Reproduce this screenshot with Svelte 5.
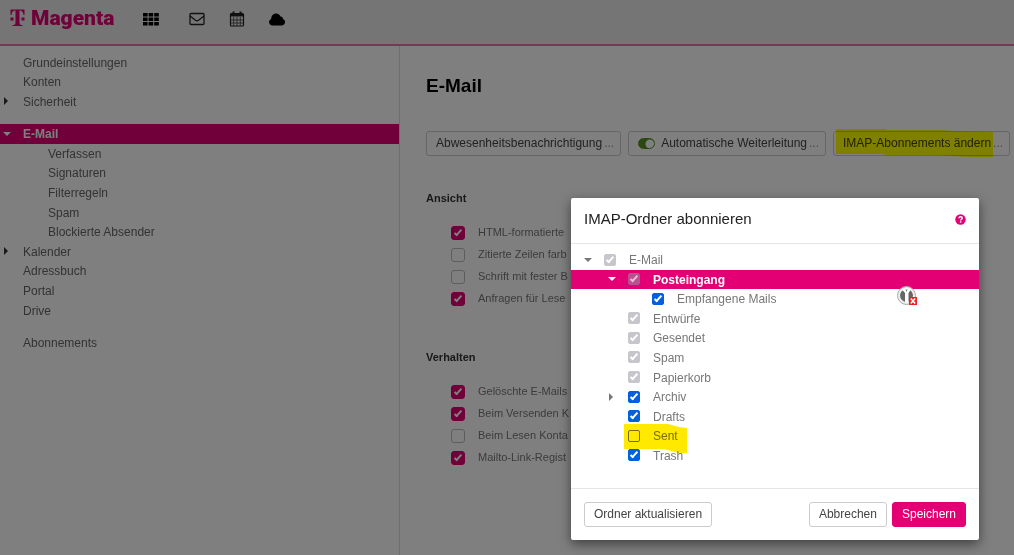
<script>
  const navGroups = [
    [
      { label: 'Grundeinstellungen' },
      { label: 'Konten' },
      { label: 'Sicherheit', arrow: 'closed' }
    ],
    [
      { label: 'E-Mail', arrow: 'open', active: true },
      { label: 'Verfassen', sub: true },
      { label: 'Signaturen', sub: true },
      { label: 'Filterregeln', sub: true },
      { label: 'Spam', sub: true },
      { label: 'Blockierte Absender', sub: true },
      { label: 'Kalender', arrow: 'closed' },
      { label: 'Adressbuch' },
      { label: 'Portal' },
      { label: 'Drive' }
    ],
    [{ label: 'Abonnements' }]
  ];

  const sections = [
    {
      title: 'Ansicht',
      options: [
        { label: 'HTML-formatierte', checked: true },
        { label: 'Zitierte Zeilen farb', checked: false },
        { label: 'Schrift mit fester B', checked: false },
        { label: 'Anfragen für Lese', checked: true }
      ]
    },
    {
      title: 'Verhalten',
      options: [
        { label: 'Gelöschte E-Mails', checked: true },
        { label: 'Beim Versenden K', checked: true },
        { label: 'Beim Lesen Konta', checked: false },
        { label: 'Mailto-Link-Regist', checked: true }
      ]
    }
  ];

  const folders = [
    { label: 'E-Mail', level: 0, arrow: 'open', checked: true, disabled: true },
    { label: 'Posteingang', level: 1, arrow: 'open', checked: true, disabled: true, active: true },
    { label: 'Empfangene Mails', level: 2, checked: true },
    { label: 'Entwürfe', level: 1, checked: true, disabled: true },
    { label: 'Gesendet', level: 1, checked: true, disabled: true },
    { label: 'Spam', level: 1, checked: true, disabled: true },
    { label: 'Papierkorb', level: 1, checked: true, disabled: true },
    { label: 'Archiv', level: 1, arrow: 'closed', checked: true },
    { label: 'Drafts', level: 1, checked: true },
    { label: 'Sent', level: 1, checked: false, marked: true },
    { label: 'Trash', level: 1, checked: true }
  ];
</script>

{#snippet caret(state)}
  <span class="caret">
    {#if state === 'open'}
      <svg width="8" height="4" viewBox="0 0 8 4"><path d="M0 0h8L4 4z" fill="currentColor" /></svg>
    {:else if state === 'closed'}
      <svg width="8" height="8" viewBox="0 0 8 8"><path d="M1 0v8l4-4z" fill="currentColor" /></svg>
    {/if}
  </span>
{/snippet}

<div class="app">
  <header>
    <a class="brand" href="#home">
      <svg width="15" height="18" viewBox="0 0 15 18" fill="#e20074">
        <path d="M0.5 0.5h14v5.500h-1c-.2-2.800-1.500-4.300-4-4.400v11.400c0 2.400.5 3 3 3.100v.9H2.500v-.9c2.500-.1 3-.7 3-3.100V1.600C3 1.700 1.700 3.200 1.500 6h-1z" />
        <path d="M.5 8.500h3v3h-3zM11.500 8.500h3v3h-3z" />
      </svg>
      <span>Magenta</span>
    </a>
    <nav class="tools">
      <a href="#apps" aria-label="Apps">
        <svg width="16" height="14" viewBox="0 0 16 14"><path d="M0 1h4.600v3.500H0zM5.600 1h4.600v3.500H5.600zM11.200 1h4.600v3.500h-4.600zM0 5.500h4.600V9H0zM5.600 5.500h4.600V9H5.600zM11.200 5.500h4.600V9h-4.600zM0 10h4.600v3.500H0zM5.600 10h4.600v3.500H5.600zM11.200 10h4.600v3.500h-4.600z" /></svg>
      </a>
      <a href="#mail" aria-label="E-Mail">
        <svg width="16" height="14" viewBox="0 0 16 14" fill="none" stroke="#222" stroke-width="1.300"><rect x="1" y="1.500" width="14" height="11" rx="1" /><path d="M1 4l5.500 4.300q1.500 1 3 0L15 4" /></svg>
      </a>
      <a href="#calendar" aria-label="Kalender">
        <svg width="16" height="16" viewBox="0 0 16 16" fill="none" stroke="#222"><rect x="1.500" y="2.500" width="13" height="12.500" rx="1" stroke-width="1.200" /><path d="M1.500 4.200h13" stroke-width="2.500" /><path d="M4.700 6v9M8 6v9M11.300 6v9M2 9h12M2 12h12" stroke-width=".7" /><path d="M4.500 .5v4M11.500 .5v4" stroke-width="2" /></svg>
      </a>
      <a href="#cloud" aria-label="Cloud">
        <svg width="16" height="14" viewBox="0 0 16 14"><path d="M3.800 13.500C1.500 13.500 0 12 0 10.100c0-1.500.9-2.700 2.200-3.200C2.200 4 4.200 1.500 7 1.500c2.100 0 3.700 1.200 4.400 3 1.500-.2 2.700 1 2.500 2.600 1.300.4 2.100 1.500 2.100 3 0 2-1.500 3.400-3.500 3.400z" /></svg>
      </a>
    </nav>
  </header>

  <div class="columns">
    <aside>
      {#each navGroups as group}
        <ul class="nav" style:min-height="{Math.floor(group.length * 19.6)}px">
          {#each group as item}
            <li class:active={item.active} class:sub={item.sub}>
              {@render caret(item.arrow)}
              <a href="#settings">{item.label}</a>
            </li>
          {/each}
        </ul>
      {/each}
    </aside>

    <main>
      <h1>E-Mail</h1>
      <div class="actions">
        <button class="btn">Abwesenheitsbenachrichtigung <i>...</i></button>
        <button class="btn"><span class="toggle"></span>Automatische Weiterleitung <i>...</i></button>
        <button class="btn imap">IMAP-Abonnements ändern <i>...</i>
          <svg class="marker" width="158" height="28" viewBox="0 0 158 28"><path d="M1 0H50L52 1H105L120 2L158 3V28H135L98 26L50 26L48 25H1z" fill="#ff0" /></svg>
        </button>
      </div>
      {#each sections as section}
        <fieldset>
          <legend>{section.title}</legend>
          {#each section.options as option}
            <label class="option">
              <input type="checkbox" class="box large" checked={option.checked} />
              <span>{option.label}</span>
            </label>
          {/each}
        </fieldset>
      {/each}
    </main>
  </div>

  <div class="backdrop"></div>

  <div class="dialog" role="dialog" aria-labelledby="dialog-title">
    <div class="dialog-head">
      <h2 id="dialog-title">IMAP-Ordner abonnieren</h2>
      <a href="#help" aria-label="Hilfe">
        <svg width="11" height="11" viewBox="0 0 11 11"><circle cx="5.500" cy="5.500" r="5.200" fill="#e20074" /><path d="M3.900 4.300C4 3.100 4.700 2.700 5.600 2.700c1 0 1.700.6 1.700 1.400 0 1.100-1.600 1.200-1.600 2.300" fill="none" stroke="#fff" stroke-width="1.400" /><path d="M4.900 7.300h1.500v1.400H4.900z" fill="#fff" /></svg>
      </a>
    </div>
    <div class="tree-area">
      <ul class="tree">
        {#each folders as folder}
          <li class="level{folder.level}" class:active={folder.active}>
            {@render caret(folder.arrow)}
            <label>
              <input type="checkbox" class="box" checked={folder.checked} disabled={folder.disabled} />
              <span>{folder.label}</span>
            </label>
            {#if folder.marked}
              <svg class="marker" width="64" height="30" viewBox="0 0 64 30"><path d="M0 0H44L55 3L63 4V29H54L40 25H0z" fill="#ffe900" /></svg>
            {/if}
          </li>
        {/each}
      </ul>
      <svg class="badge" width="20" height="20" viewBox="0 0 20 20">
        <circle cx="9.500" cy="9.500" r="9" fill="#eee" stroke="#aaa" />
        <circle cx="9.500" cy="9.500" r="6.500" fill="#666" />
        <path d="M5 3.500Q9.500 1 14 3.500L11.500 7V16H8V7z" fill="#fff" />
        <path d="M8.500 3.500h2L9.500 6z" fill="#777" />
        <path d="M12 11h8v8h-8z" fill="#f02020" />
        <path d="M13.800 12.500l4.400 5M18.200 12.500l-4.400 5" stroke="#fff" stroke-width="1.500" />
      </svg>
    </div>
    <div class="dialog-foot">
      <button class="btn">Ordner aktualisieren</button>
      <button class="btn cancel">Abbrechen</button>
      <button class="btn primary">Speichern</button>
    </div>
  </div>
</div>

<style>
  :global(body) {
    background: #fff;
  }
  .app {
    position: relative;
    display: flex;
    flex-direction: column;
    min-height: 100vh;
    overflow: hidden;
    font: 12px/19px "Liberation Sans", Arial, sans-serif;
    color: #333;
  }
  .app *,
  .app *::before {
    box-sizing: border-box;
  }
  ul,
  h1,
  h2,
  fieldset {
    margin: 0;
    padding: 0;
    border: 0;
    list-style: none;
  }
  a {
    color: inherit;
    text-decoration: none;
  }
  svg {
    display: block;
    flex: none;
  }
  header {
    display: flex;
    align-items: center;
    gap: 29px;
    height: 46px;
    padding: 0 10px 8px;
    background: #ebebeb;
    border-bottom: 2px solid #ee70ac;
  }
  .brand {
    display: flex;
    align-items: center;
    gap: 6px;
    color: #e20074;
    font: 900 21px/30px Roboto, sans-serif;
  }
  .tools {
    display: flex;
    align-items: center;
    padding-top: 2px;
  }
  .tools a + a {
    margin-left: 24px;
  }
  .tools a:nth-child(2) {
    margin-left: 30px;
  }
  .columns {
    display: flex;
    flex: 1;
  }
  aside {
    display: flex;
    flex-direction: column;
    gap: 13px;
    flex: 0 0 400px;
    padding-top: 7px;
    border-right: 1px solid #ddd;
  }
  .nav,
  .tree {
    display: grid;
    grid-auto-rows: 1fr;
  }
  li {
    display: flex;
    align-items: center;
  }
  .caret {
    display: flex;
    justify-content: center;
    flex: none;
    width: 14px;
  }
  .nav li {
    gap: 9px;
    color: #666;
  }
  .nav a {
    padding-top: 1px;
    line-height: 18px;
  }
  .nav .caret {
    color: #333;
  }
  .nav .sub {
    padding-left: 25px;
  }
  .nav .active,
  .tree .active {
    background: #e20074;
    color: #fff;
    font-weight: bold;
  }
  .nav .active .caret,
  .active .caret {
    color: #fff;
  }
  main {
    flex: 1;
    min-width: 0;
    padding: 28px 7px 0 26px;
  }
  h1 {
    color: #000;
    font-size: 19px;
    line-height: 24px;
  }
  .actions {
    display: flex;
    gap: 7px;
    margin: 33px 0;
  }
  .btn {
    display: flex;
    align-items: center;
    gap: 2px;
    height: 25px;
    padding: 0 9px;
    border: 1px solid #ccc;
    border-radius: 3px;
    background: #fff;
    color: #444;
    font: inherit;
    white-space: nowrap;
  }
  .actions .btn {
    padding: 0 6px 0 9px;
  }
  .btn i {
    color: #999;
    font-style: normal;
  }
  .imap {
    position: relative;
  }
  .marker {
    position: absolute;
    mix-blend-mode: multiply;
    pointer-events: none;
  }
  .imap .marker {
    left: 1px;
    top: -3px;
  }
  .toggle {
    width: 17px;
    height: 11px;
    margin-right: 4px;
    border: 1px solid #559020;
    border-radius: 6px;
    background: radial-gradient(circle at 11px 5px, #fff 4px, #559020 5px);
  }
  fieldset {
    margin-bottom: 38px;
    min-width: 0;
  }
  legend {
    margin-bottom: 14px;
    padding: 0;
    font-size: 11px;
    font-weight: bold;
  }
  .option {
    display: flex;
    align-items: center;
    gap: 13px;
    height: 22px;
    padding-left: 25px;
    color: #777;
    font-size: 11px;
    white-space: nowrap;
  }
  .option span {
    padding-bottom: 2px;
  }
  .box {
    position: relative;
    flex: none;
    appearance: none;
    width: 12px;
    height: 12px;
    margin: 0;
    border: 1px solid #767676;
    border-radius: 2px;
  }
  .box:checked {
    border-color: #0560df;
    background: #0560df;
  }
  .box:checked::before {
    content: "";
    position: absolute;
    left: 3px;
    top: 0;
    width: 4px;
    height: 8px;
    border: solid #fff;
    border-width: 0 2px 2px 0;
    transform: rotate(42deg);
  }
  .box:disabled {
    border-color: #c6c6cc;
    background: #c6c6cc;
  }
  .active .box:disabled {
    border-color: #b9508f;
    background: #b9508f;
  }
  .active .box:disabled::before {
    border-color: #e6bfd6;
  }
  .large {
    width: 14px;
    height: 14px;
    border-color: #bbb;
    border-radius: 3px;
  }
  .large:checked {
    border-color: #e20074;
    background: #e20074;
  }
  .large:checked::before {
    left: 4px;
    top: 1px;
  }
  .backdrop {
    position: absolute;
    inset: 0;
    background: rgba(0, 0, 0, 0.5);
  }
  .dialog {
    position: absolute;
    top: 198px;
    right: 35px;
    width: 408px;
    border-radius: 2px;
    background: #fff;
    box-shadow: 0 4px 12px rgba(0, 0, 0, 0.5);
  }
  .dialog-head {
    display: flex;
    align-items: center;
    justify-content: space-between;
    height: 46px;
    padding: 0 13px 5px;
    border-bottom: 1px solid #e5e5e5;
  }
  .dialog-head a {
    padding-top: 3px;
  }
  h2 {
    color: #222;
    font-size: 15px;
    font-weight: normal;
  }
  .tree-area {
    position: relative;
    padding: 6px 0 23px;
  }
  .tree {
    min-height: 215px;
    color: #777;
  }
  .tree li {
    position: relative;
    gap: 9px;
    padding-left: 10px;
  }
  .tree .level1 {
    padding-left: 34px;
  }
  .tree .level2 {
    padding-left: 58px;
  }
  .tree .active {
    color: #fff;
  }
  .tree label {
    display: flex;
    align-items: center;
    gap: 13px;
  }
  .tree label span {
    padding-top: 1px;
    line-height: 18px;
  }
  .tree .marker {
    left: 53px;
    top: -2px;
  }
  .badge {
    position: absolute;
    right: 62px;
    top: 42px;
  }
  .dialog-foot {
    display: flex;
    gap: 5px;
    padding: 13px;
    border-top: 1px solid #e5e5e5;
  }
  .cancel {
    margin-left: auto;
  }
  .primary {
    border-color: #e20074;
    background: #e20074;
    color: #fff;
  }
</style>
